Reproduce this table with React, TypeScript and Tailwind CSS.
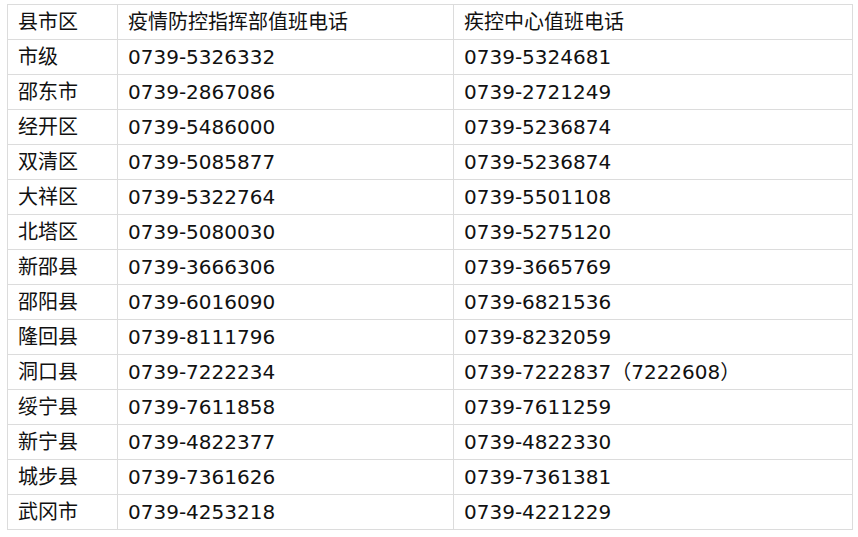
import React from "react";

const rows: [string, string, string][] = [
  ["县市区", "疫情防控指挥部值班电话", "疾控中心值班电话"],
  ["市级", "0739-5326332", "0739-5324681"],
  ["邵东市", "0739-2867086", "0739-2721249"],
  ["经开区", "0739-5486000", "0739-5236874"],
  ["双清区", "0739-5085877", "0739-5236874"],
  ["大祥区", "0739-5322764", "0739-5501108"],
  ["北塔区", "0739-5080030", "0739-5275120"],
  ["新邵县", "0739-3666306", "0739-3665769"],
  ["邵阳县", "0739-6016090", "0739-6821536"],
  ["隆回县", "0739-8111796", "0739-8232059"],
  ["洞口县", "0739-7222234", "0739-7222837（7222608）"],
  ["绥宁县", "0739-7611858", "0739-7611259"],
  ["新宁县", "0739-4822377", "0739-4822330"],
  ["城步县", "0739-7361626", "0739-7361381"],
  ["武冈市", "0739-4253218", "0739-4221229"],
];

export default function App() {
  return (
    <div className="w-[858px] h-[537px] bg-white pt-[4px] pl-[7px]">
      <div
        className="grid grid-cols-[110px_336px_399px] w-[846px] border-l border-t border-[#dcdcdc] text-[20px] text-[#111]"
        style={{ fontFamily: '"DejaVu Sans", "Noto Sans CJK SC", sans-serif' }}
      >
        {rows.map((r, i) =>
          r.map((c, j) => (
            <div
              key={`${i}-${j}`}
              className="h-[35px] border-r border-b border-[#dcdcdc] pl-[10px] flex items-center whitespace-nowrap leading-none"
            >
              {c}
            </div>
          ))
        )}
      </div>
    </div>
  );
}
